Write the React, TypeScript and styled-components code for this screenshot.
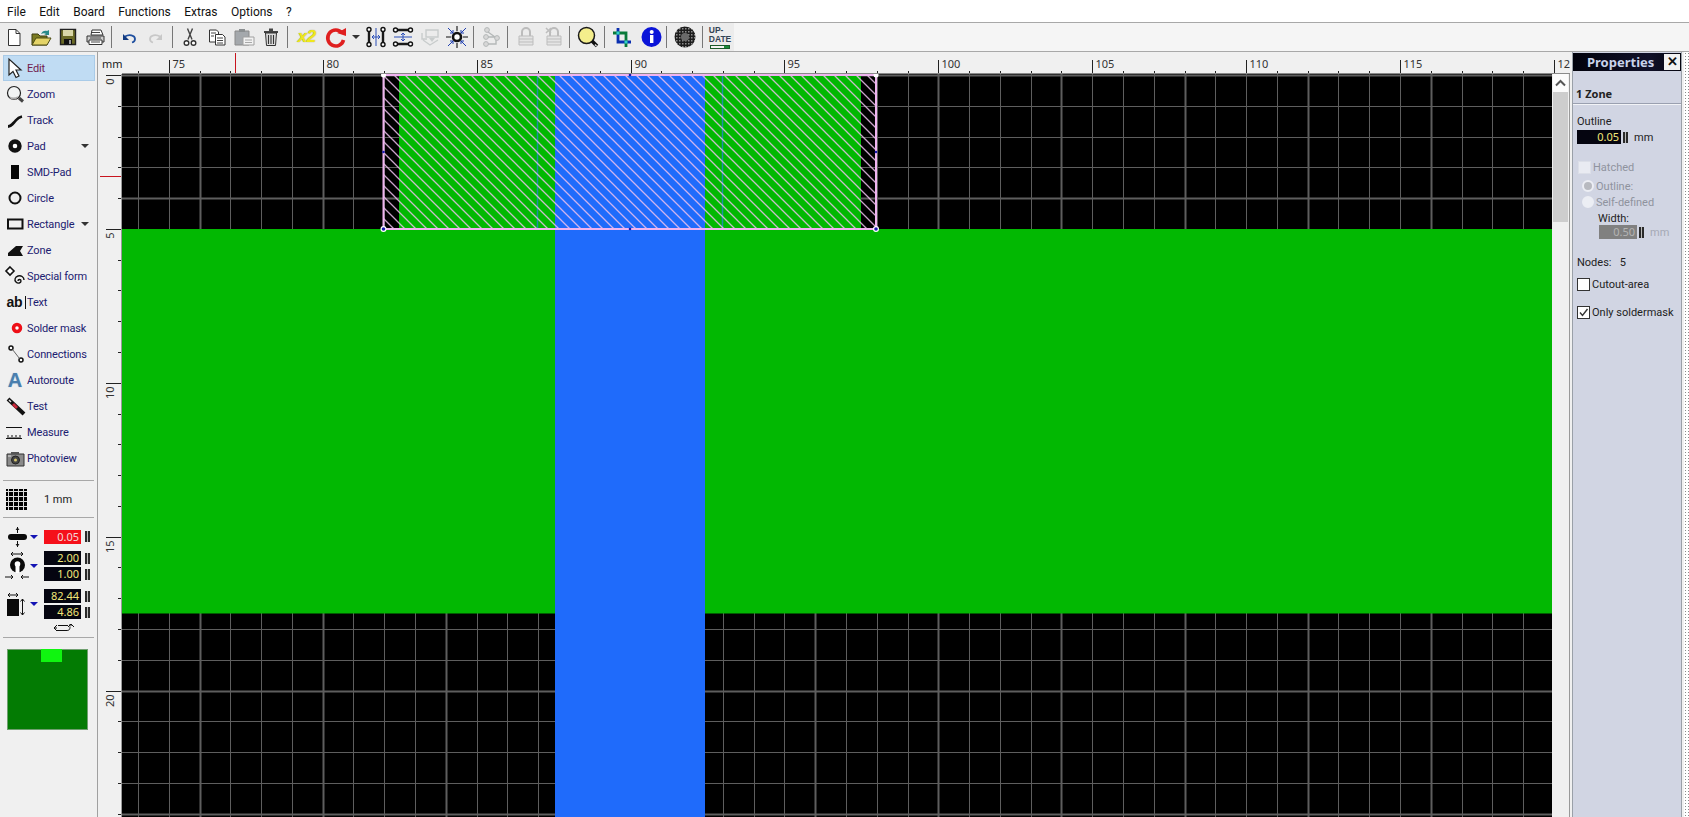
import React from "react";
import styled, { createGlobalStyle } from "styled-components";

const UI = `"Noto Sans", "Open Sans", Arial, sans-serif`;
const TXT = `Roboto, "Liberation Sans", Arial, sans-serif`;

const Global = createGlobalStyle`
  html, body { margin: 0; padding: 0; background: #f0f0f0; overflow: hidden; }
  * { box-sizing: border-box; }
`;

const Page = styled.div`
  width: 1689px; height: 817px; display: flex; flex-direction: column;
  font-family: ${TXT}; font-size: 11px; overflow: hidden; background: #f0f0f0;
`;
const MenuBar = styled.div`
  height: 23px; flex: none; background: #fff; border-bottom: 1px solid #a8a8a8;
  display: flex; align-items: center; gap: 13.500px; padding: 1px 0 0 7px;
  font-size: 12px; color: #111;
`;
const ToolBar = styled.div`
  height: 29px; flex: none; display: flex; align-items: center; background: #f5f5f5;
  border-bottom: 1px solid #a8a8a8;
`;
const ToolGroup = styled.div`
  display: flex; align-items: center; height: 28px; background: #ececec;
`;
const Tool = styled.div<{ $w?: number }>`
  width: ${p => p.$w ?? 27}px; height: 28px; flex: none;
  display: flex; align-items: center; justify-content: center;
`;
const ToolSep = styled.div`
  width: 1px; height: 22px; margin: 0 3px; background: #777; flex: none;
`;
const Drop = styled.div`
  width: 0; height: 0; border-left: 4px solid transparent; border-right: 4px solid transparent;
  border-top: 4px solid ${p => p.color ?? "#333"}; flex: none;
`;
const X2 = styled.span`
  font: italic bold 17px "Liberation Sans", Arial, sans-serif; color: #efe81c;
  text-shadow: 0 0 1px #8a8420; letter-spacing: -0.5px;
`;
const Main = styled.div`
  flex: 1; display: flex; min-height: 0;
`;
const Side = styled.div`
  width: 98px; flex: none; border-right: 1px solid #a0a0a0; padding: 3px 0 0 3px;
  display: flex; flex-direction: column;
`;
const SideRow = styled.div<{ $on?: boolean }>`
  width: 92px; height: 26px; flex: none; display: flex; align-items: center; position: relative;
  font-size: 11px; letter-spacing: -0.15px; color: ${p => (p.$on ? "#70204e" : "#1c2070")};
  background: ${p => (p.$on ? "#c0dcf3" : "transparent")};
  box-shadow: ${p => (p.$on ? "inset 0 0 0 1px #a9cbe8" : "none")};
`;
const SideIcon = styled.div`
  width: 24px; height: 24px; flex: none; display: flex; align-items: center; justify-content: center;
`;
const SideDrop = styled.div`
  margin-left: auto; margin-right: 6px; display: flex;
`;
const AbText = styled.span`
  font: bold 14px "Liberation Sans", Arial, sans-serif; color: #111; border-right: 1px solid #111;
  padding-right: 2px; line-height: 13px; margin-left: 2px;
`;
const AutoA = styled.span`
  font: bold 20px "Liberation Sans", Arial, sans-serif; color: #4a7fae; text-shadow: 0 0 1px #8fb6d6;
`;
const SideSep = styled.div<{ $mt?: number }>`
  width: 91px; height: 1px; background: #a8a8a8; flex: none; margin-top: ${p => p.$mt ?? 0}px;
`;
const GridRow = styled.div`
  height: 36px; flex: none; display: flex; align-items: center; padding-left: 3px; color: #222;
`;
const GridSwatch = styled.div`
  width: 21px; height: 21px; flex: none;
  background-color: #000;
  background-image: linear-gradient(#ddd 1px, transparent 1px), linear-gradient(90deg, #ddd 1px, transparent 1px);
  background-size: 5px 5px; background-position: 2px 2px;
`;
const GridLabel = styled.div`
  width: 62px; text-align: center; font-size: 11px;
`;
const ValueGroup = styled.div<{ $mt: number; $h: number }>`
  display: flex; align-items: center; margin-top: ${p => p.$mt}px; flex: none; height: ${p => p.$h}px;
`;
const ValueIcon = styled.div`
  width: 27px; flex: none; display: flex; justify-content: center;
`;
const TriSlot = styled.div`
  width: 14px; flex: none; display: flex;
`;
const ValueStack = styled.div`
  display: flex; flex-direction: column; gap: 2px;
`;
const ValueLine = styled.div`
  display: flex; align-items: center; gap: 4px;
`;
const Field = styled.div<{ $bg?: string; $fg?: string; $w?: number }>`
  width: ${p => p.$w ?? 37}px; height: 14px; background: ${p => p.$bg ?? "#050510"};
  color: ${p => p.$fg ?? "#f2e678"}; text-align: right; padding-right: 2px;
  font: 11px/14px ${UI}; flex: none;
`;
const Spin = styled.div`
  width: 5px; height: 11px; flex: none;
  background: linear-gradient(90deg, #2a2a2a 0 2px, #bbb 2px 3px, #2a2a2a 3px 5px);
`;
const SwapRow = styled.div`
  height: 14px; margin-top: 2px; padding-left: 50px; flex: none; display: flex;
`;
const Preview = styled.div`
  width: 81px; height: 81px; margin: 11px 0 0 4px; background: #037b03; flex: none;
  box-shadow: 0 0 0 1px #6f9f6f inset; display: flex; justify-content: center; padding-left: 8px;
`;
const PreviewPad = styled.div`
  width: 21px; height: 13px; background: #10f510;
`;
const Work = styled.div`
  width: 1472px; flex: none; display: grid; grid-template-columns: 24px 1430px 18px; grid-template-rows: 22px 1fr;
`;
const TopRuler = styled.svg`
  grid-column: 1 / 4; display: block;
`;
const LeftRuler = styled.svg` display: block; `;
const Board = styled.svg` display: block; background: #000; `;
const ScrollCol = styled.div`
  width: 18px; display: flex; flex-direction: column; padding-left: 1px; border-right: 1px solid #999;
`;
const ScrollBtn = styled.div`
  height: 18px; width: 15px; background: #fbfbfb; display: flex; align-items: center; justify-content: center; flex: none;
`;
const ScrollThumb = styled.div`
  height: 130px; width: 15px; background: #cdcdcd; flex: none;
`;
const Panel = styled.div`
  width: 110px; margin-left: 2px; flex: none; background: #d1d5e3; padding-top: 1px;
  border-left: 1px solid #9aa0a8; border-right: 1px solid #9aa0a8;
  display: flex; flex-direction: column; color: #222;
`;
const PanelTitle = styled.div`
  height: 18px; flex: none; background: linear-gradient(90deg, #02020c, #101028 70%, #05050f);
  color: #c9d3ea; font: 700 13px ${UI}; display: flex; align-items: center; padding-left: 14px;
  position: relative;
`;
const CloseBtn = styled.div`
  position: absolute; right: 1px; top: 1px; width: 16px; height: 16px; background: #f2f2f2; color: #111;
  font: bold 13px/15px "Liberation Sans", Arial, sans-serif; text-align: center;
`;
const PanelHead = styled.div`
  height: 34px; flex: none; padding: 12px 0 0 3px; display: flex; align-items: center;
  border-bottom: 1px solid #f2f3f7; box-shadow: 0 -1px 0 #9aa0b0 inset; font: 700 11px ${UI};
`;
const PanelLine = styled.div<{ $mt?: number; $ml?: number; $off?: boolean }>`
  height: 14px; flex: none; display: flex; align-items: center; gap: 2px; white-space: nowrap;
  margin-top: ${p => p.$mt ?? 0}px; margin-left: ${p => p.$ml ?? 4}px;
  color: ${p => (p.$off ? "#8f939e" : "#222")}; font-size: 11px;
`;
const Unit = styled.span<{ $off?: boolean }>`
  margin-left: 4px; color: ${p => (p.$off ? "#a5a9b5" : "#222")};
`;
const Check = styled.div<{ $off?: boolean }>`
  width: 13px; height: 13px; flex: none; background: ${p => (p.$off ? "#e9ebf2" : "#fff")};
  border: 1px solid ${p => (p.$off ? "#dcdfe8" : "#333")}; display: flex; align-items: center; justify-content: center;
`;
const Radio = styled.div<{ $dot?: boolean }>`
  width: 12px; height: 12px; border-radius: 50%; background: ${p => (p.$dot ? "#b8bac0" : "#eceef4")};
  border: 2px solid #eceef4; flex: none;
`;
const Dotted = styled.div`
  flex: 1; background-color: #fff;
  background-image: radial-gradient(#8a8a8a 0.9px, transparent 1px); background-size: 3px 3px;
  margin-left: 2px;
`;

const S: React.FC<{ children: React.ReactNode; w?: number; h?: number }> = ({ children, w = 24, h = 24 }) => (
  <svg width={w} height={h} viewBox={`0 0 ${w} ${h}`} style={{ display: "block", flex: "none" }}>{children}</svg>
);

/* Toolbar icons */
const INew = () => <S><path d="M6.500 4.500h7.500l4 4v12H6.500z" fill="#fff" stroke="#333" /><path d="M14 4.500v4h4" fill="none" stroke="#333" /></S>;
const IOpen = () => <S><path d="M3 20V9h6l2 2h7v9z" fill="#7a7a20" stroke="#3c3c10" /><path d="M3 20l4-7h15l-4 7z" fill="#e4d468" stroke="#4c4c14" /><path d="M12 9c1-3 4-4 6-3l2-1v5h-5l2-1c-1-1-3-1-5 0z" fill="#2a8a8a" /></S>;
const ISave = () => <S><path d="M4.500 4.500h15v15h-15z" fill="#6a6a26" stroke="#222" strokeWidth="1.400" /><path d="M7 5h10v6H7z" fill="#d8d6a8" /><path d="M8 14h8v5.500H8z" fill="#111" /><path d="M13 15h2v4h-2z" fill="#999" /></S>;
const IPrint = () => <S><path d="M9 5h9l2 5H8z" fill="#fff" stroke="#333" /><path d="M4 11h17v6H4z" fill="#cfcfcf" stroke="#333" /><path d="M6 15h13v4.500H6z" fill="#fff" stroke="#333" /><path d="M8 17h9M9 7.500h8M7 13h11" stroke="#444" /></S>;
const IUndo = ({ off }: { off?: boolean }) => <S><g transform={off ? "translate(24 0) scale(-1 1)" : undefined}><path d="M8 11.500c4-2.500 10-1.500 10 2.500 0 2-1 3-3 3.500" fill="none" stroke={off ? "#c8c8c8" : "#1f4f9f"} strokeWidth="1.800" /><path d="M6 9v6h6z" fill={off ? "#c8c8c8" : "#123a80"} /></g></S>;
const ICut = () => <S><path d="M9.500 3.500l4.500 11M14.500 3.500l-4.500 11" stroke="#444" strokeWidth="1.400" /><circle cx="8.500" cy="18" r="2.300" fill="#fff" stroke="#333" strokeWidth="1.400" /><circle cx="15.500" cy="18" r="2.300" fill="#fff" stroke="#333" strokeWidth="1.400" /></S>;
const ICopy = () => <S><path d="M4.500 5h7l2 2v10h-9z" fill="#fff" stroke="#333" /><path d="M10.500 9.500h7l2.500 2.500v8h-9.500z" fill="#fff" stroke="#333" /><path d="M6 8h5M6 11h3M12 13h6M12 15.500h6M12 18h6" stroke="#444" /></S>;
const IPaste = () => <S><path d="M3 6h14v14H3z" fill="#a4a8ac" stroke="#8a8a8a" /><path d="M7 4h6v3H7z" fill="#8a8e90" /><path d="M11 12h11v8H11z" fill="#f2f2f2" stroke="#a0a0a0" /><path d="M13 15h7M13 17.500h7" stroke="#a8a8a8" /></S>;
const ITrash = () => <S><path d="M5 6h14v2H5zM10 3.500h4V6h-4z" fill="#444" /><path d="M6.500 8h11l-1 12.500h-9z" fill="#ddd" stroke="#333" /><path d="M9.500 10v9M12 10v9M14.500 10v9" stroke="#333" strokeWidth="1.100" /></S>;
const IRot = () => <S><path d="M18 8a8 8 0 1 0 1.500 7" fill="none" stroke="#df1f1f" strokeWidth="3.600" /><path d="M13 8l9 3V3z" fill="#df1f1f" /></S>;
const MirrorShape = () => (
  <>
    <path d="M5 5v14M19 5v14" stroke="#1a1a1a" strokeWidth="2.400" />
    <g fill="#fff" stroke="#111" strokeWidth="1.400">
      <circle cx="5" cy="4.500" r="2" /><circle cx="5" cy="19.500" r="2" />
      <circle cx="19" cy="4.500" r="2" /><circle cx="19" cy="19.500" r="2" />
    </g>
    <path d="M12 3v18M8 12h8M8 12l2-2M8 12l2 2M16 12l-2-2M16 12l-2 2" stroke="#2a4fb8" fill="none" />
  </>
);
const IMirH = () => <S><MirrorShape /></S>;
const IMirV = () => <S><g transform="rotate(90 12 12)"><MirrorShape /></g></S>;
const IBoard = () => <S><path d="M8 5h12v7H8zM4 8v6l5 0M5 15l7 5 8-5" fill="none" stroke="#c8cccc" strokeWidth="1.400" /><path d="M11 13l3 4 3-4z" fill="#c8cccc" /></S>;
const ISpread = () => <S><circle cx="12" cy="12" r="4" fill="#fff" stroke="#111" strokeWidth="2.600" /><path d="M1 12h5M18 12h5M12 1v5M12 18v5" stroke="#111" strokeWidth="1.100" /><path d="M3 3l5 5M21 3l-5 5M3 21l5-5M21 21l-5-5M8 8V5M8 8H5M16 8V5M16 8h3M8 16v3M8 16H5M16 16v3M16 16h3" stroke="#1f3fb0" fill="none" /></S>;
const INet = () => <S><g fill="#d8d8d8" stroke="#b4b8b8"><circle cx="8" cy="5" r="2.400" /><circle cx="7" cy="12" r="2.400" /><circle cx="18" cy="13" r="2.400" /><circle cx="7" cy="19" r="2.400" /></g><path d="M9 7l7 5M9 12h7M9 19h8v-4" stroke="#b4b8b8" fill="none" strokeWidth="1.400" /></S>;
const ILock = ({ x }: { x?: boolean }) => <S><path d="M8 11V7a4 4 0 0 1 8 0v4" fill="none" stroke="#bcbcbc" strokeWidth="2" /><path d="M5 11h14v9H5z" fill="#e4e4e4" stroke="#bdbdbd" /><path d="M5 14h14M5 17h14" stroke="#bdbdbd" />{x && <path d="M4 3l5 5M9 3L4 8" stroke="#bdbdbd" strokeWidth="1.500" />}</S>;
const IGlass = () => <S w={26}><circle cx="12.500" cy="10.500" r="8" fill="#f4ee8c" stroke="#1a1a1a" strokeWidth="1.500" /><path d="M18 16l5 5" stroke="#111" strokeWidth="3.500" /><path d="M21 19.500l1.500 1.500" stroke="#ddd" strokeWidth="1.500" /></S>;
const ICrop = () => <S><path d="M8 3v14h13" fill="none" stroke="#0a2fb0" strokeWidth="2.800" /><path d="M3 8h13v14" fill="none" stroke="#0a7a3a" strokeWidth="2.800" /><path d="M6.500 6.500h3v3h-3zM14.500 15.500h3v3h-3z" fill="#30d0d0" /></S>;
const IInfo = () => <S w={26}><circle cx="14.500" cy="12" r="10" fill="#0a14d8" /><path d="M13 10h3.400v8H13z" fill="#fff" /><circle cx="14.700" cy="7" r="2" fill="#fff" /></S>;
const IChip = () => (
  <S>
    <defs>
      <pattern id="chipdots" patternUnits="userSpaceOnUse" width="3" height="3">
        <rect width="3" height="3" fill="#1c1c1c" />
        <rect width="1.500" height="1.500" fill="#8c8c8c" />
      </pattern>
    </defs>
    <circle cx="12" cy="12" r="10.500" fill="url(#chipdots)" />
    <circle cx="12" cy="12" r="4" fill="#6a6a6a" />
  </S>
);
const UpdateBox = styled.div`
  display: flex; flex-direction: column; align-items: center; width: 22px;
  font: bold 8.5px/9px "Liberation Sans", Arial, sans-serif; color: #345;
`;
const UpdateBar = styled.div`
  width: 20px; height: 4px; border: 1px solid #1a5a2a; margin-top: 1px;
  background: linear-gradient(90deg, #f2f2f2 70%, #1a8a3a 70%);
`;

/* Sidebar icons */
const ICursor = () => <S><path d="M6 3v16l4-3.500 3 6 3-1.500-3-6h5z" fill="#fff" stroke="#222" strokeWidth="1.200" /></S>;
const IZoom = () => <S><circle cx="11" cy="11" r="6.500" fill="#f2f4f4" stroke="#222" strokeWidth="1.200" /><path d="M6 14c3 2 6 2 9 0l-2 3.500H8z" fill="#aaa" /><path d="M16 16l4 3.500" stroke="#444" strokeWidth="3" /></S>;
const ITrack = () => <S><path d="M5 18.500c3 0 3-1 6-4s3-5 8-6" fill="none" stroke="#111" strokeWidth="2.800" /></S>;
const IPad = () => <S><circle cx="12" cy="12" r="4.500" fill="#fff" stroke="#111" strokeWidth="4.400" /></S>;
const ISmd = () => <S><path d="M8 6h8v14H8z" fill="#050505" transform="translate(0 -1)" /></S>;
const ICircle = () => <S><circle cx="12" cy="12" r="5.500" fill="none" stroke="#111" strokeWidth="2" /></S>;
const IRect = () => <S><path d="M5 7.500h14.500v9H5z" fill="none" stroke="#111" strokeWidth="2" /></S>;
const IZone = () => <S><path d="M5 18v-3l8-7h7l-3 5 3 5z" fill="#111" /></S>;
const ISpecial = () => <S><path d="M7 3l4 4-4 4-4-4z" fill="#fff" stroke="#111" strokeWidth="1.600" /><path d="M15 17c0-2 3-2 3 0s-3 3-5 1-1-5 2-6 6 1 6 4" fill="none" stroke="#111" strokeWidth="1.400" /></S>;
const ISolder = () => <S><circle cx="14" cy="12" r="3.500" fill="#fff" stroke="#ee0f17" strokeWidth="3.500" /></S>;
const IConn = () => <S><circle cx="8" cy="6" r="2" fill="#fff" stroke="#111" strokeWidth="1.500" /><circle cx="18" cy="18" r="2" fill="#fff" stroke="#111" strokeWidth="1.500" /><path d="M9.500 7.500l7 9" stroke="#666" /></S>;
const ITest = () => <S><path d="M5 5l16 15" stroke="#111" strokeWidth="4" /><path d="M10 10l4 4" stroke="#c8283a" strokeWidth="3" /><path d="M6 6l2 2" stroke="#ddd" strokeWidth="1.500" /></S>;
const IMeasure = () => <S><path d="M3 7.500h16M3 18.500h16M5 18v-3M9 18v-3M13 18v-3M17 18v-3M7 18v-1M11 18v-1M15 18v-1" stroke="#111" fill="none" /></S>;
const ICamera = () => <S><path d="M4 8h17v12H4z" fill="#8a8a8a" stroke="#333" /><path d="M8 6h8v2H8z" fill="#555" /><circle cx="12.500" cy="14" r="4" fill="#444" stroke="#222" /><circle cx="12.500" cy="14" r="1.500" fill="#d8c870" /><path d="M5 10h3" stroke="#ddd" /></S>;

const Arrow = ({ d }: { d: string }) => <path d={d} stroke="#111" fill="none" />;
const IWidth = () => (
  <S w={24} h={20}>
    <rect x="3" y="7" width="19" height="6" rx="3" fill="#0a0a0a" />
    <Arrow d="M12.500 0v6M12.500 1l-1.500 2M12.500 1l1.500 2M12.500 14v6M12.500 19l-1.500-2M12.500 19l1.500-2" />
  </S>
);
const IVia = () => (
  <S w={24} h={34}>
    <Arrow d="M6 5h12M6 5l2-2M6 5l2 2M18 5l-2-2M18 5l-2 2M0 28h8M8 28l-2-2M8 28l-2 2M24 28h-8M16 28l2-2M16 28l2 2" />
    <circle cx="12.500" cy="16" r="7.500" fill="#0a0a0a" />
    <circle cx="12.500" cy="15" r="2.800" fill="#fff" />
    <path d="M10.500 15h4v9h-4z" fill="#fff" />
  </S>
);
const ISize = () => (
  <S w={24} h={32}>
    <path d="M2 11h12v17H2z" fill="#0a0a0a" />
    <Arrow d="M3 7h10M3 7l2-2M3 7l2 2M13 7l-2-2M13 7l-2 2M17.500 11v16M17.500 11l-2 2.500M17.500 11l2 2.500M17.500 27l-2-2.500M17.500 27l2-2.500" />
  </S>
);
const ISwap = () => (
  <S w={22} h={14}>
    <path d="M1 7h3M1 7l3-3M1 7l3 3M3 9.500h10c3 0 4-.5 4-4M14.500 8" stroke="#111" fill="none" />
    <path d="M19 4h-3M21 6l-3-3-3 3M5 4.500h10" stroke="#111" fill="none" />
  </S>
);

const mmX = (mm: number) => 168.8 + (mm - 75) * 30.78;
const mmY = (mm: number) => 75 + mm * 30.78;

const ruler = "#222";
const RulerTop = () => {
  const ticks: React.ReactNode[] = [];
  for (let mm = 74; mm <= 120; mm++) {
    const x = Math.round(mmX(mm)) + 0.5;
    const major = mm % 5 === 0;
    ticks.push(<path key={mm} d={`M${x} ${major ? 60 : 71}V73`} stroke={ruler} />);
    if (major) ticks.push(<text key={"t" + mm} x={x + 3} y={68} fontSize="11" fill="#333" fontFamily={UI}>{mm === 120 ? "12" : mm}</text>);
  }
  return (
    <TopRuler width="1472" height="22" viewBox="98 52 1472 22">
      <rect x="98" y="52" width="1472" height="22" fill="#f0f0f0" />
      <text x="102" y="68" fontSize="11" fill="#222" fontFamily={UI}>mm</text>
      {ticks}
      <path d="M235.500 53V73" stroke="#c8141e" />
      <path d="M122 73.500H1570" stroke="#8a8a8a" />
    </TopRuler>
  );
};
const RulerLeft = () => {
  const ticks: React.ReactNode[] = [];
  for (let mm = 0; mm <= 24; mm++) {
    const y = Math.round(mmY(mm)) + 0.5;
    const major = mm % 5 === 0;
    ticks.push(<path key={mm} d={`M${major ? 106 : 118} ${y}H122`} stroke={ruler} />);
    if (major) ticks.push(<text key={"t" + mm} x={114} y={y + 3} fontSize="11" fill="#333" fontFamily={UI} textAnchor="end" transform={`rotate(-90 114 ${y + 3})`}>{mm}</text>);
  }
  return (
    <LeftRuler width="24" height="743" viewBox="98 74 24 743">
      <rect x="98" y="74" width="24" height="743" fill="#f0f0f0" />
      {ticks}
      <path d="M100 176.500H122" stroke="#c8141e" />
      <path d="M121.500 74V817" stroke="#9a9a9a" />
    </LeftRuler>
  );
};

const Dot = ({ x, y, big }: { x: number; y: number; big?: boolean }) => (
  <g>
    {big && <circle cx={x} cy={y} r="3" fill="#fff" />}
    <circle cx={x} cy={y} r={big ? 1.8 : 1.3} fill="#1a1ab0" />
  </g>
);

const PcbCanvas = () => {
  const lines: React.ReactNode[] = [];
  for (let mm = 71; mm <= 122; mm++) {
    const x = Math.round(mmX(mm)) + 0.5;
    const thick = (mm - 76) % 4 === 0;
    lines.push(<path key={"v" + mm} d={`M${x} 74V817`} stroke="#5e5e5e" strokeWidth={thick ? 2 : 1} />);
  }
  for (let mm = 0; mm <= 24; mm++) {
    const y = Math.round(mmY(mm)) + 0.5;
    const thick = mm % 4 === 0;
    lines.push(<path key={"h" + mm} d={`M122 ${y}H1552`} stroke="#5e5e5e" strokeWidth={thick ? 2 : 1} />);
  }
  return (
    <Board width="1430" height="743" viewBox="122 74 1430 743">
      <defs>
        <pattern id="hatch" patternUnits="userSpaceOnUse" width="11" height="11">
          <path d="M0 0L11 11M-3 8L3 14M8 -3L14 3" stroke="#ecc0ec" strokeOpacity="0.85" strokeWidth="1.300" fill="none" />
        </pattern>
      </defs>
      {lines}
      <rect x="122" y="229" width="1430" height="384.500" fill="#02b802" />
      <rect x="399" y="75" width="462" height="154" fill="#02b802" />
      <rect x="555" y="75" width="150" height="742" fill="#1f6bfb" />
      <path d="M537.500 75V229M722.500 75V229" stroke="#1f8ea8" strokeWidth="1.500" />
      <rect x="383.500" y="75" width="492.500" height="154" fill="url(#hatch)" />
      <rect x="383.500" y="75" width="492.500" height="154" fill="none" stroke="#f0b4f0" strokeWidth="2" />
      <Dot x={383.5} y={229} big />
      <Dot x={876} y={229} big />
      <Dot x={383.5} y={152} />
      <Dot x={876} y={152} />
      <Dot x={630} y={229} />
      <Dot x={630} y={75} />
      <circle cx="383.500" cy="75" r="2.500" fill="#fff" />
      <circle cx="876" cy="75" r="2.500" fill="#fff" />
    </Board>
  );
};

const sideItems: [string, React.ReactNode, boolean?][] = [
  ["Edit", <ICursor />],
  ["Zoom", <IZoom />],
  ["Track", <ITrack />],
  ["Pad", <IPad />, true],
  ["SMD-Pad", <ISmd />],
  ["Circle", <ICircle />],
  ["Rectangle", <IRect />, true],
  ["Zone", <IZone />],
  ["Special form", <ISpecial />],
  ["Text", <AbText>ab</AbText>],
  ["Solder mask", <ISolder />],
  ["Connections", <IConn />],
  ["Autoroute", <AutoA>A</AutoA>],
  ["Test", <ITest />],
  ["Measure", <IMeasure />],
  ["Photoview", <ICamera />],
];

const ValueField = ({ v, bg, fg }: { v: string; bg?: string; fg?: string }) => (
  <ValueLine>
    <Field $bg={bg} $fg={fg}>{v}</Field>
    <Spin />
  </ValueLine>
);

export default function App() {
  return (
    <Page>
      <Global />
      <MenuBar>
        {["File", "Edit", "Board", "Functions", "Extras", "Options", "?"].map(m => <span key={m}>{m}</span>)}
      </MenuBar>
      <ToolBar>
        <ToolGroup>
          <Tool><INew /></Tool><Tool><IOpen /></Tool><Tool><ISave /></Tool><Tool><IPrint /></Tool>
          <ToolSep />
          <Tool><IUndo /></Tool><Tool><IUndo off /></Tool>
          <ToolSep />
          <Tool><ICut /></Tool><Tool><ICopy /></Tool><Tool><IPaste /></Tool><Tool><ITrash /></Tool>
          <ToolSep />
          <Tool $w={31}><X2>x2</X2></Tool><Tool><IRot /></Tool><Tool $w={13}><Drop /></Tool>
          <Tool><IMirH /></Tool><Tool><IMirV /></Tool><Tool><IBoard /></Tool><Tool><ISpread /></Tool>
          <ToolSep />
          <Tool><INet /></Tool>
          <ToolSep />
          <Tool $w={30}><ILock /></Tool><Tool $w={25}><ILock x /></Tool>
          <ToolSep />
          <Tool $w={28}><IGlass /></Tool>
          <ToolSep />
          <Tool $w={28}><ICrop /></Tool><Tool $w={27}><IInfo /></Tool>
          <ToolSep />
          <Tool $w={29}><IChip /></Tool>
          <ToolSep />
          <Tool $w={28}><UpdateBox>UP-<br />DATE<UpdateBar /></UpdateBox></Tool>
        </ToolGroup>
      </ToolBar>
      <Main>
        <Side>
          {sideItems.map(([label, icon, drop], i) => (
            <SideRow key={label} $on={i === 0}>
              <SideIcon>{icon}</SideIcon>
              {label}
              {drop && <SideDrop><Drop /></SideDrop>}
            </SideRow>
          ))}
          <SideSep $mt={9} />
          <GridRow><GridSwatch /><GridLabel>1 mm</GridLabel></GridRow>
          <SideSep />
          <ValueGroup $mt={11} $h={15}>
            <ValueIcon><IWidth /></ValueIcon>
            <TriSlot><Drop color="#1414b4" /></TriSlot>
            <ValueField v="0.05" bg="#f5101a" fg="#f3d8d8" />
          </ValueGroup>
          <ValueGroup $mt={7} $h={30}>
            <ValueIcon><IVia /></ValueIcon>
            <TriSlot><Drop color="#1414b4" /></TriSlot>
            <ValueStack><ValueField v="2.00" /><ValueField v="1.00" /></ValueStack>
          </ValueGroup>
          <ValueGroup $mt={8} $h={30}>
            <ValueIcon><ISize /></ValueIcon>
            <TriSlot><Drop color="#1414b4" /></TriSlot>
            <ValueStack><ValueField v="82.44" /><ValueField v="4.86" /></ValueStack>
          </ValueGroup>
          <SwapRow><ISwap /></SwapRow>
          <SideSep $mt={2} />
          <Preview><PreviewPad /></Preview>
        </Side>
        <Work>
          <RulerTop />
          <RulerLeft />
          <PcbCanvas />
          <ScrollCol>
            <ScrollBtn>
              <svg width="11" height="8" viewBox="0 0 11 8"><path d="M1 6.500l4.500-4.500 4.500 4.500" fill="none" stroke="#555" strokeWidth="2" /></svg>
            </ScrollBtn>
            <ScrollThumb />
          </ScrollCol>
        </Work>
        <Panel>
          <PanelTitle>Properties<CloseBtn>✕</CloseBtn></PanelTitle>
          <PanelHead>1 Zone</PanelHead>
          <PanelLine $mt={9}>Outline</PanelLine>
          <PanelLine $mt={2}><Field $w={44}>0.05</Field><Spin /><Unit>mm</Unit></PanelLine>
          <PanelLine $mt={16} $ml={5} $off><Check $off />Hatched</PanelLine>
          <PanelLine $mt={5} $ml={9} $off><Radio $dot />Outline:</PanelLine>
          <PanelLine $mt={2} $ml={9} $off><Radio />Self-defined</PanelLine>
          <PanelLine $mt={2} $ml={25}>Width:</PanelLine>
          <PanelLine $ml={26}><Field $w={38} $bg="#808080" $fg="#b4b4b4">0.50</Field><Spin /><Unit $off>mm</Unit></PanelLine>
          <PanelLine $mt={16}>Nodes:&nbsp;&nbsp;&nbsp;5</PanelLine>
          <PanelLine $mt={8}><Check />Cutout-area</PanelLine>
          <PanelLine $mt={14}>
            <Check>
              <svg width="11" height="11" viewBox="0 0 11 11"><path d="M2 5.500l2.500 3L9.500 2" fill="none" stroke="#333" strokeWidth="1.400" /></svg>
            </Check>
            Only soldermask
          </PanelLine>
        </Panel>
        <Dotted />
      </Main>
    </Page>
  );
}
